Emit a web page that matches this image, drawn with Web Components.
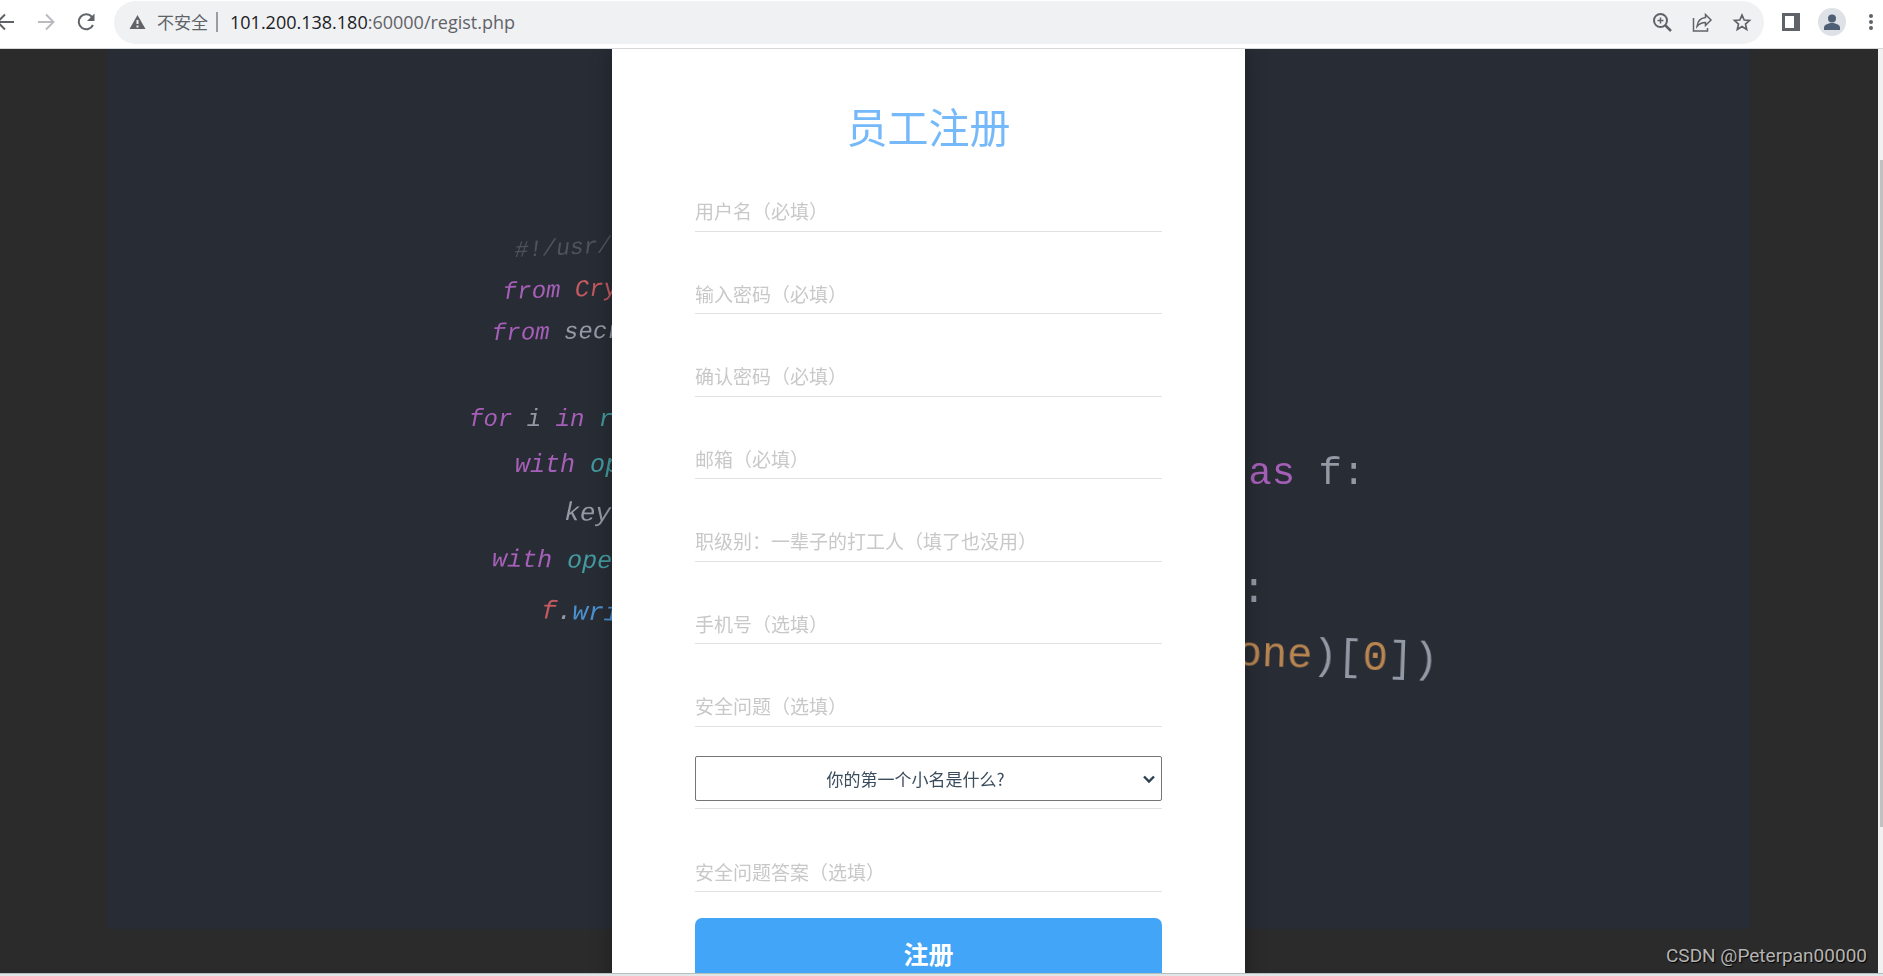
<!DOCTYPE html>
<html lang="zh-CN">
<head>
<meta charset="utf-8">
<title>员工注册</title>
<style>
html, body { margin: 0; height: 100%; }
body { background: #fff; font-family: "Open Sans", "Noto Sans CJK SC", sans-serif; overflow: hidden; }
</style>
</head>
<body>
<app-window>
  <browser-toolbar slot="toolbar" status="不安全" host="101.200.138.180" path=":60000/regist.php"></browser-toolbar>
  <code-backdrop slot="backdrop"></code-backdrop>
  <register-card heading="员工注册">
    <line-field label="用户名（必填）"></line-field>
    <line-field label="输入密码（必填）" type="password"></line-field>
    <line-field label="确认密码（必填）" type="password"></line-field>
    <line-field label="邮箱（必填）" type="email"></line-field>
    <line-field label="职级别：一辈子的打工人（填了也没用）"></line-field>
    <line-field label="手机号（选填）" type="tel"></line-field>
    <line-field label="安全问题（选填）"></line-field>
    <question-select></question-select>
    <line-field label="安全问题答案（选填）"></line-field>
    <submit-button slot="action">注册</submit-button>
  </register-card>
  <span slot="watermark">CSDN @Peterpan00000</span>
</app-window>

<script>
function define(name, html, setup) {
  const template = document.createElement('template');
  template.innerHTML = html;
  customElements.define(name, class extends HTMLElement {
    constructor() {
      super();
      this.attachShadow({ mode: 'open' }).append(template.content.cloneNode(true));
    }
    connectedCallback() { if (setup) setup(this, this.shadowRoot); }
  });
}

define('app-window', `
<style>
:host { display: flex; flex-direction: column; height: 100vh; }
main { flex: 1; min-height: 0; display: flex; background: #2b2b2b; }
.page { position: relative; flex: 1; overflow: hidden; padding-right: 21px; }
.scroll { width: 5px; background: #f1f1f1; box-sizing: border-box; padding: 111px 0 0 2px; }
.thumb { height: 82%; max-height: 667px; background: #c1c1c1; }
.mark { position: absolute; right: 11px; bottom: 5px; font: 19px/24px Roboto, sans-serif; color: #b4b4b4; text-shadow: 1px 1px 1px #000; }
footer { height: 2px; background: #e1e7e7; border-top: 1px solid #b6bfbf; }
</style>
<slot name="toolbar"></slot>
<main>
  <div class="page"><slot name="backdrop"></slot><slot></slot><div class="mark"><slot name="watermark"></slot></div></div>
  <div class="scroll"><div class="thumb"></div></div>
</main>
<footer></footer>`);

define('browser-toolbar', `
<style>
:host { display: flex; align-items: center; height: 49px; box-sizing: border-box; padding-bottom: 4px; overflow: hidden; background: #fff; border-bottom: 1px solid #d5d8db; color: #5f6368; }
button { appearance: none; border: 0; background: none; padding: 0; margin: 0; display: grid; place-items: center; color: inherit; font: inherit; }
svg { display: block; fill: none; stroke: currentColor; stroke-width: 2; }
nav { display: flex; gap: 16px; margin-left: -6px; margin-right: 16px; }
nav button { width: 24px; }
.pill { flex: 1; display: flex; align-items: center; height: 43px; border-radius: 22px; background: #f0f1f3; padding: 0 10px 0 15px; box-sizing: border-box; }
.safe { display: flex; font: 17px/24px "Noto Sans CJK SC", sans-serif; align-items: center; }
.safe button { display: flex; gap: 11px; }
.bar { width: 2px; height: 20px; background: #9a9da1; margin: 0 12px 0 8px; }
.url { flex: 1; font: 18px/24px "Open Sans", sans-serif; white-space: nowrap; }
.url b { font-weight: 400; color: #202124; }
.tools { display: flex; gap: 16px; }
.tools button { width: 24px; }
.side { display: flex; align-items: center; gap: 18px; margin: 0 9px 0 18px; }
.side button:last-child { width: 6px; margin-left: 4px; }
</style>
<nav>
  <button aria-label="后退"><svg width="24" height="24"><path d="M20 12H4M11 4.500 3.500 12 11 19.500"/></svg></button>
  <button aria-label="前进"><svg width="24" height="24" style="color:#b9bbbe"><path d="M4 12H19M12 4.500 19.500 12 12 19.500"/></svg></button>
  <button aria-label="刷新"><svg width="24" height="24"><path d="M19 15A7.500 7.500 0 1 1 18 7"/><path d="M20.500 3.500V11H13Z" fill="currentColor" stroke="none"/></svg></button>
</nav>
<div class="pill">
  <div class="safe"><button><svg width="17" height="16"><path d="M8.500 1 16.500 15H.5Z" fill="currentColor" stroke="none"/><path d="M8.500 6v4M8.500 11.500v2" stroke="#f0f1f3"/></svg><span class="status"></span></button></div>
  <span class="bar"></span>
  <div class="url"><b></b><span class="path"></span></div>
  <div class="tools">
    <button aria-label="缩放"><svg width="24" height="24" stroke-width="1.8"><circle cx="10.500" cy="10.500" r="6.500"/><path d="m15 15 6 6" stroke-width="2.500"/><path d="M10.500 7.500v6M7.500 10.500h6" stroke-width="1.500"/></svg></button>
    <button aria-label="分享"><svg width="24" height="24" style="stroke-width:1.500"><path d="M3.500 8v13H17.500V18"/><path d="M15.500 4.500 21 10l-5.500 5.500v-3C11 12.500 9 14 7 16.500 7.500 12 10 8 15.500 7.500Z"/></svg></button>
    <button aria-label="收藏"><svg width="24" height="24"><path d="m12 5 2.200 5 5.300.5-4 3.600 1.200 5.300-4.700-2.800-4.700 2.800 1.200-5.300-4-3.600 5.300-.5Z" style="stroke-width:1.700"/></svg></button>
  </div>
</div>
<div class="side">
  <button aria-label="侧边栏"><svg width="18" height="18"><path d="M0 0H18V18H0ZM3 3V15H12V3Z" fill="currentColor" fill-rule="evenodd" stroke="none"/></svg></button>
  <button aria-label="个人资料"><svg width="28" height="28"><circle cx="14" cy="14" r="14" fill="#dee1e6" stroke="none"/><g fill="#4f5f76" stroke="none"><circle cx="14" cy="10.500" r="4"/><path d="M6 22v-2.500c0-3 5-4.500 8-4.500s8 1.500 8 4.500V22Z"/></g></svg></button>
  <button aria-label="菜单"><svg width="6" height="20"><g fill="currentColor" stroke="none"><circle cx="3" cy="4" r="2"/><circle cx="3" cy="10" r="2"/><circle cx="3" cy="16" r="2"/></g></svg></button>
</div>`, (el, root) => {
  root.querySelector('.status').textContent = el.getAttribute('status');
  root.querySelector('b').textContent = el.getAttribute('host');
  root.querySelector('.path').textContent = el.getAttribute('path');
});

/* Wallpaper: a photographed code listing, seen at an angle and slightly out of focus. */
define('code-backdrop', `
<style>
:host { position: absolute; top: 0; left: 0; right: 21px; display: flex; justify-content: center; }
svg { display: block; width: 88.5%; font-family: "Liberation Mono", monospace; white-space: pre; }
.l { font-style: italic; filter: blur(.6px); }
.r { filter: blur(.6px); }
.p { fill: #a65fb8; } .t { fill: #439a9f; } .g { fill: #9399a5; } .d { fill: #4e545e; } .e { fill: #c35a60; } .b { fill: #4b91d0; } .o { fill: #b98551; }
</style>
<svg viewBox="0 0 1643 880" aria-hidden="true">
  <rect width="1643" height="880" fill="#282c34"/>
  <g class="l">
    <text class="d" transform="translate(408 208) rotate(-3)" font-size="23">#!/usr/bin</text>
    <text class="p" transform="translate(396 250) rotate(-2)" font-size="24">from <tspan class="e">Cry</tspan></text>
    <text class="p" transform="translate(385 291) rotate(-1)" font-size="24">from <tspan class="g">secr</tspan></text>
    <text class="p" x="362" y="377" font-size="24">for <tspan class="g">i</tspan> in <tspan class="t">r</tspan></text>
    <text class="p" x="408" y="423" font-size="25">with <tspan class="t">op</tspan></text>
    <text class="g" transform="translate(457 471) rotate(1)" font-size="26">key</text>
    <text class="p" transform="translate(385 517) rotate(1)" font-size="25">with <tspan class="t">ope</tspan></text>
    <text class="e" transform="translate(434 569) rotate(2)" font-size="26">f<tspan class="g">.</tspan><tspan class="b">wri</tspan></text>
  </g>
  <g class="r">
    <text class="p" x="1141" y="435" font-size="39">as <tspan class="g">f:</tspan></text>
    <text class="g" x="1134" y="553" font-size="42">:</text>
    <text class="o" transform="translate(1129 616) rotate(2)" font-size="42">one<tspan class="g">)[</tspan>0<tspan class="g">])</tspan></text>
  </g>
</svg>`);

define('register-card', `
<style>
:host { position: relative; display: block; box-sizing: border-box; width: 633px; max-width: 100%; margin: 0 auto; padding: 48px 83px 60px; background: #fff; box-shadow: 0 0 20px rgba(0,0,0,.3); }
h1 { margin: 0; font: 400 41px/56px "Noto Sans CJK SC", sans-serif; color: #76b9fa; text-align: center; }
form { margin: 0; }
.rows { display: grid; grid-auto-rows: 1fr; height: 743px; margin-top: -4px; }
.action { margin-top: 26px; }
</style>
<h1></h1>
<form><div class="rows"><slot></slot></div><div class="action"><slot name="action"></slot></div></form>`,
(el, root) => { root.querySelector('h1').textContent = el.getAttribute('heading'); });

define('line-field', `
<style>
:host { display: flex; flex-direction: column; justify-content: flex-end; border-bottom: 1px solid #e2e2e2; }
input { width: 100%; height: 40px; box-sizing: border-box; border: 0; outline: 0; padding: 0; background: none; font: 400 19px/28px "Noto Sans CJK SC", sans-serif; color: #2c3e50; }
input::placeholder { color: #c8c8c8; opacity: 1; }
</style>
<input>`, (el, root) => {
  const input = root.querySelector('input');
  input.type = el.getAttribute('type') || 'text';
  input.placeholder = el.getAttribute('label');
  input.setAttribute('aria-label', el.getAttribute('label'));
});

define('question-select', `
<style>
:host { display: flex; flex-direction: column; justify-content: flex-end; border-bottom: 1px solid #e2e2e2; padding-bottom: 7px; }
.box { position: relative; }
select { appearance: none; display: block; width: 100%; height: 45px; box-sizing: border-box; border: 1px solid #767676; border-radius: 2px; background: #fff; padding: 0 26px 0 0; font: 400 17px/24px "Noto Sans CJK SC", sans-serif; color: #3b4c5d; text-align: center; text-align-last: center; }
svg { position: absolute; right: 7px; top: 19px; fill: none; stroke: #2c4050; stroke-width: 2.400; pointer-events: none; }
</style>
<div class="box"><select aria-label="安全问题"><option>你的第一个小名是什么?</option></select>
<svg width="12" height="9"><path d="M1 1.500 6 6.500 11 1.500"/></svg></div>`);

define('submit-button', `
<style>
:host { display: block; }
button { width: 100%; height: 70px; border: 0; border-radius: 7px; padding: 0; background: #42a5f8; color: #fff; font: 700 25px/36px "Noto Sans CJK SC", sans-serif; }
</style>
<button type="button"><slot></slot></button>`);
</script>
</body>
</html>
